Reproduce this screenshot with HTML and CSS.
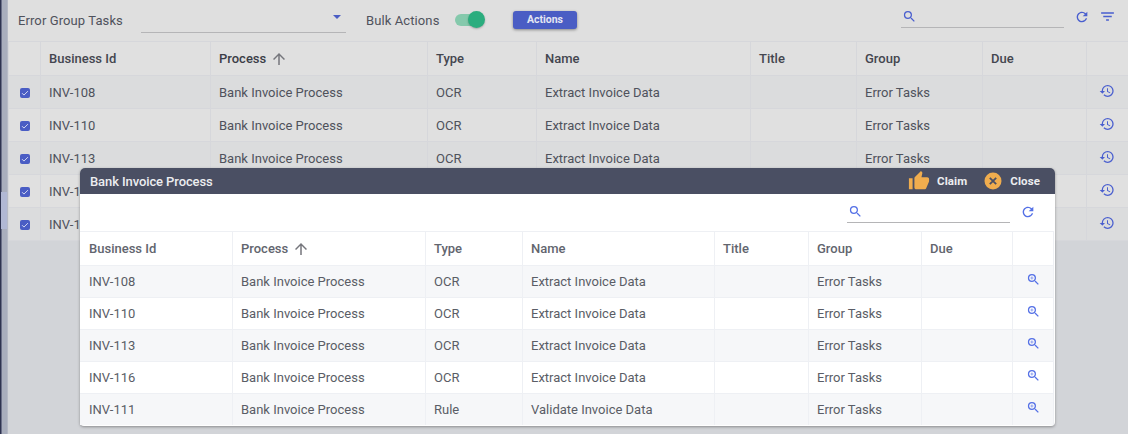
FILE: index.html
```html
<!DOCTYPE html>
<html lang="en">
<head>
<meta charset="utf-8">
<title>Error Group Tasks</title>
<link rel="stylesheet" href="styles.css">
</head>
<body>
<svg class="defs" aria-hidden="true">
  <symbol id="i-search" viewBox="0 0 24 24"><path d="M15.5 14h-.79l-.28-.27A6.471 6.471 0 0 0 16 9.5 6.5 6.5 0 1 0 9.5 16c1.61 0 3.09-.59 4.23-1.57l.27.28v.79l5 4.99L20.49 19l-4.99-5zm-6 0C7.01 14 5 11.99 5 9.5S7.01 5 9.5 5 14 7.01 14 9.5 11.99 14 9.5 14z"/></symbol>
  <symbol id="i-zoom" viewBox="0 0 24 24"><path d="M15.5 14h-.79l-.28-.27A6.471 6.471 0 0 0 16 9.5 6.5 6.5 0 1 0 9.5 16c1.61 0 3.09-.59 4.23-1.57l.27.28v.79l5 4.99L20.49 19l-4.99-5zm-6 0C7.01 14 5 11.99 5 9.5S7.01 5 9.5 5 14 7.01 14 9.5 11.99 14 9.5 14z"/><path d="M12 10h-2v2H9v-2H7V9h2V7h1v2h2v1z"/></symbol>
  <symbol id="i-refresh" viewBox="0 0 24 24"><path d="M17.65 6.35A7.958 7.958 0 0 0 12 4c-4.42 0-7.99 3.58-7.99 8s3.57 8 7.99 8c3.73 0 6.84-2.55 7.73-6h-2.08A5.99 5.99 0 0 1 12 18c-3.31 0-6-2.69-6-6s2.69-6 6-6c1.66 0 3.14.69 4.22 1.78L13 11h7V4l-2.35 2.35z"/></symbol>
  <symbol id="i-filter" viewBox="0 0 24 24"><path d="M10 18h4v-2h-4v2zM3 6v2h18V6H3zm3 7h12v-2H6v2z"/></symbol>
  <symbol id="i-history" viewBox="0 0 24 24"><path d="M13 3a9 9 0 0 0-9 9H1l3.89 3.89.07.14L9 12H6c0-3.87 3.13-7 7-7s7 3.13 7 7-3.13 7-7 7c-1.93 0-3.68-.79-4.94-2.06l-1.42 1.42A8.954 8.954 0 0 0 13 21a9 9 0 0 0 0-18zm-1 5v5l4.28 2.54.72-1.21-3.5-2.08V8H12z"/></symbol>
  <symbol id="i-up" viewBox="0 0 24 24"><path d="M4 12l1.41 1.41L11 7.83V20h2V7.83l5.58 5.59L20 12l-8-8-8 8z"/></symbol>
  <symbol id="i-thumb" viewBox="0 0 24 24"><path d="M1 21h4V9H1v12zm22-11c0-1.1-.9-2-2-2h-6.31l.95-4.57.03-.32c0-.41-.17-.79-.44-1.06L14.17 1 7.59 7.59C7.22 7.95 7 8.45 7 9v10c0 1.1.9 2 2 2h9c.83 0 1.54-.5 1.84-1.22l3.02-7.05c.09-.23.14-.47.14-.73v-2z"/></symbol>
  <symbol id="i-check" viewBox="0 0 24 24"><path d="M5 12.5l4.5 4.5L19 7.5" fill="none" stroke="currentColor" stroke-width="2.2"/></symbol>
</svg>

<div class="app">
  <div class="rail"><div class="rail-thumb"></div></div>

  <main class="page">
    <div class="toolbar">
      <span class="tb-label">Error Group Tasks</span>
      <div class="select"><span class="caret"></span></div>
      <span class="bulk">Bulk Actions</span>
      <div class="toggle"><span class="knob"></span></div>
      <button class="btn-actions" type="button">Actions</button>
      <div class="search tb-search"><svg class="ic ic-search"><use href="#i-search"/></svg></div>
      <svg class="ic ic-refresh"><use href="#i-refresh"/></svg>
      <svg class="ic ic-filter"><use href="#i-filter"/></svg>
    </div>

    <div class="grid">
      <div class="row head">
        <div class="cell"></div>
        <div class="cell">Business Id</div>
        <div class="cell sorted">Process <svg class="ic ic-up"><use href="#i-up"/></svg></div>
        <div class="cell">Type</div>
        <div class="cell">Name</div>
        <div class="cell">Title</div>
        <div class="cell">Group</div>
        <div class="cell">Due</div>
        <div class="cell"></div>
      </div>
      <div class="row">
        <div class="cell"><span class="check"><svg><use href="#i-check"/></svg></span></div>
        <div class="cell">INV-108</div><div class="cell">Bank Invoice Process</div><div class="cell">OCR</div><div class="cell">Extract Invoice Data</div><div class="cell"></div><div class="cell">Error Tasks</div><div class="cell"></div>
        <div class="cell cell-ic"><svg class="ic ic-hist"><use href="#i-history"/></svg></div>
      </div>
      <div class="row">
        <div class="cell"><span class="check"><svg><use href="#i-check"/></svg></span></div>
        <div class="cell">INV-110</div><div class="cell">Bank Invoice Process</div><div class="cell">OCR</div><div class="cell">Extract Invoice Data</div><div class="cell"></div><div class="cell">Error Tasks</div><div class="cell"></div>
        <div class="cell cell-ic"><svg class="ic ic-hist"><use href="#i-history"/></svg></div>
      </div>
      <div class="row">
        <div class="cell"><span class="check"><svg><use href="#i-check"/></svg></span></div>
        <div class="cell">INV-113</div><div class="cell">Bank Invoice Process</div><div class="cell">OCR</div><div class="cell">Extract Invoice Data</div><div class="cell"></div><div class="cell">Error Tasks</div><div class="cell"></div>
        <div class="cell cell-ic"><svg class="ic ic-hist"><use href="#i-history"/></svg></div>
      </div>
      <div class="row">
        <div class="cell"><span class="check"><svg><use href="#i-check"/></svg></span></div>
        <div class="cell">INV-116</div><div class="cell">Bank Invoice Process</div><div class="cell">OCR</div><div class="cell">Extract Invoice Data</div><div class="cell"></div><div class="cell">Error Tasks</div><div class="cell"></div>
        <div class="cell cell-ic"><svg class="ic ic-hist"><use href="#i-history"/></svg></div>
      </div>
      <div class="row">
        <div class="cell"><span class="check"><svg><use href="#i-check"/></svg></span></div>
        <div class="cell">INV-111</div><div class="cell">Bank Invoice Process</div><div class="cell">Rule</div><div class="cell">Validate Invoice Data</div><div class="cell"></div><div class="cell">Error Tasks</div><div class="cell"></div>
        <div class="cell cell-ic"><svg class="ic ic-hist"><use href="#i-history"/></svg></div>
      </div>
    </div>
  </main>

  <section class="modal">
    <header class="modal-head">
      <span class="modal-title">Bank Invoice Process</span>
      <svg class="ic ic-thumb"><use href="#i-thumb"/></svg>
      <span class="modal-act act-claim">Claim</span>
      <svg class="ic-cancel" viewBox="0 0 18 18"><circle cx="9" cy="9" r="8.5" fill="#f0ad4e"/><path d="M5.8 5.8l6.4 6.4M12.2 5.8l-6.4 6.4" stroke="#4a4f63" stroke-width="1.8" fill="none"/></svg>
      <span class="modal-act">Close</span>
    </header>
    <div class="modal-tools">
      <div class="search m-search"><svg class="ic ic-search"><use href="#i-search"/></svg></div>
      <svg class="ic ic-refresh m-refresh"><use href="#i-refresh"/></svg>
    </div>
    <div class="mgrid">
      <div class="mrow mhead">
        <div class="mcell">Business Id</div>
        <div class="mcell">Process <svg class="ic ic-up"><use href="#i-up"/></svg></div>
        <div class="mcell">Type</div>
        <div class="mcell">Name</div>
        <div class="mcell">Title</div>
        <div class="mcell">Group</div>
        <div class="mcell">Due</div>
        <div class="mcell"></div>
      </div>
      <div class="mrow">
        <div class="mcell">INV-108</div><div class="mcell">Bank Invoice Process</div><div class="mcell">OCR</div><div class="mcell">Extract Invoice Data</div><div class="mcell"></div><div class="mcell">Error Tasks</div><div class="mcell"></div>
        <div class="mcell mcell-ic"><svg class="ic ic-zoom"><use href="#i-zoom"/></svg></div>
      </div>
      <div class="mrow">
        <div class="mcell">INV-110</div><div class="mcell">Bank Invoice Process</div><div class="mcell">OCR</div><div class="mcell">Extract Invoice Data</div><div class="mcell"></div><div class="mcell">Error Tasks</div><div class="mcell"></div>
        <div class="mcell mcell-ic"><svg class="ic ic-zoom"><use href="#i-zoom"/></svg></div>
      </div>
      <div class="mrow">
        <div class="mcell">INV-113</div><div class="mcell">Bank Invoice Process</div><div class="mcell">OCR</div><div class="mcell">Extract Invoice Data</div><div class="mcell"></div><div class="mcell">Error Tasks</div><div class="mcell"></div>
        <div class="mcell mcell-ic"><svg class="ic ic-zoom"><use href="#i-zoom"/></svg></div>
      </div>
      <div class="mrow">
        <div class="mcell">INV-116</div><div class="mcell">Bank Invoice Process</div><div class="mcell">OCR</div><div class="mcell">Extract Invoice Data</div><div class="mcell"></div><div class="mcell">Error Tasks</div><div class="mcell"></div>
        <div class="mcell mcell-ic"><svg class="ic ic-zoom"><use href="#i-zoom"/></svg></div>
      </div>
      <div class="mrow">
        <div class="mcell">INV-111</div><div class="mcell">Bank Invoice Process</div><div class="mcell">Rule</div><div class="mcell">Validate Invoice Data</div><div class="mcell"></div><div class="mcell">Error Tasks</div><div class="mcell"></div>
        <div class="mcell mcell-ic"><svg class="ic ic-zoom"><use href="#i-zoom"/></svg></div>
      </div>
    </div>
  </section>
</div>
</body>
</html>
```
FILE: styles.css
```css
* { box-sizing: border-box; }
html, body { margin: 0; height: 100%; overflow: hidden; }
body { font-family: Roboto, "Liberation Sans", sans-serif; font-size: 13px; color: #4f525c; background: #d2d4d8; }
.defs { display: none; }
.ic { display: block; fill: #4a5fcf; flex: none; }

.app { position: relative; display: flex; width: 1128px; height: 434px; }
.rail { width: 8px; flex: none; background: linear-gradient(90deg, #6a6f88 0 1px, #a9aebd 1px); border-left: 1px solid #2e3350; border-right: 1px solid #b6bac6; }
.rail-thumb { margin-top: 192px; height: 37px; background: #b1b8d4; }
.page { flex: 1; min-width: 0; }

.toolbar { height: 41px; background: #dfdfdf; display: flex; align-items: flex-start; }
.tb-label { margin: 13px 0 0 10px; width: 123px; font-size: 13px; letter-spacing: .1px; }
.select { position: relative; width: 205px; height: 33px; border-bottom: 1px solid #b5b5b7; }
.caret { position: absolute; left: 192px; top: 15px; border: 4px solid transparent; border-top-color: #4a5dc4; border-bottom: 0; }
.bulk { margin: 13px 0 0 20px; width: 89px; letter-spacing: .1px; }
.toggle { position: relative; margin-top: 14px; width: 28px; height: 12px; border-radius: 6px; background: #85c9ac; }
.knob { position: absolute; left: 13px; top: -3px; width: 17px; height: 17px; border-radius: 50%; background: #2bad7e; box-shadow: 0 1px 2px rgba(0,0,0,.25); }
.btn-actions { margin: 11px 0 0 30px; width: 64px; height: 18px; padding: 0 0 2px; border: 0; border-radius: 3px; background: #4a5dc4; color: #e4e6f2; font: 700 10.5px Roboto, sans-serif; box-shadow: 0 1px 3px rgba(0,0,0,.4); }

.search { border-bottom: 1px solid #b5b5b7; width: 163px; }
.tb-search { margin: 0 0 0 324px; height: 28px; padding: 9px 0 0 1px; }
.ic-search { width: 15px; height: 15px; }
.ic-refresh { width: 16px; height: 16px; }
.toolbar .ic-refresh { margin: 9px 0 0 10px; }
.ic-filter { width: 17px; height: 17px; margin: 8px 0 0 9px; }

.row { display: grid; grid-template-columns: 32px 170px 217px 109px 214px 106px 126px 104px 42px; height: 33px; background: #e0e0e0; border-bottom: 1px solid #d6d7db; }
.grid .row:nth-child(even) { background: #dbdcdd; }
.head { height: 35px; background: #e0e0e0; border-top: 1px solid #d6d7db; font-weight: 500; color: #44464f; }
.cell { display: flex; align-items: center; padding-left: 8px; border-left: 1px solid #d6d7db; white-space: nowrap; }
.sorted { color: #3b3d47; }
.ic-up { width: 18px; height: 18px; margin-left: 4px; fill: #75767c; }
.check { display: flex; width: 10px; height: 10px; border-radius: 2px; background: #4a5dc4; color: #dfe2f4; margin: 2px 0 0 3px; }
.check svg { width: 10px; height: 10px; display: block; }
.cell-ic { padding-left: 12px; align-items: flex-start; padding-top: 7px; }
.ic-hist { width: 16px; height: 16px; }

.modal { position: absolute; left: 80px; top: 168px; width: 975px; height: 258px; background: #fff; border-radius: 5px 5px 4px 4px; box-shadow: 0 1px 3px rgba(0,0,0,.35); color: #5a5d66; }
.modal .ic-search, .modal .ic-refresh, .modal .ic-zoom { fill: #5470e6; }
.modal .ic-up { fill: #75767c; }
.modal-head { height: 26px; display: flex; align-items: center; padding: 0 15px 0 10px; background: #4a4f63; border-radius: 5px 5px 0 0; color: #ecedf0; font-weight: 700; font-size: 12px; }
.modal-title { flex: 1; font-size: 13px; font-weight: 500; letter-spacing: -.1px; }
.ic-thumb { width: 22px; height: 22px; fill: #f0ad4e; }
.modal-act { font-size: 11.5px; letter-spacing: .1px; }
.ic-thumb + .modal-act { margin-left: 7px; }
.act-claim { margin-right: 17px; }
.ic-cancel { width: 18px; height: 18px; margin-right: 8px; flex: none; }

.modal-tools { height: 37px; display: flex; align-items: flex-start; padding-left: 767px; }
.m-search { height: 29px; padding: 10px 0 0 1px; }
.m-refresh { margin: 10px 0 0 10px; }
.mgrid { width: 974px; }
.mrow { display: grid; grid-template-columns: 152px 193px 97px 192px 94px 113px 91px 42px; height: 32px; background: #fff; border-top: 1px solid #eef0f4; border-right: 1px solid #eef0f4; }
.mhead { height: 34px; font-weight: 500; color: #62656e; }
.mgrid .mrow:nth-child(even) { background: #f6f7f9; }
.mcell { display: flex; align-items: center; padding-left: 8px; border-left: 1px solid #eef0f4; white-space: nowrap; }
.mcell:first-child { padding-left: 9px; border-left: 0; }
.mcell-ic { padding-left: 13px; align-items: flex-start; padding-top: 6px; }
.ic-zoom { width: 15px; height: 15px; }
```
